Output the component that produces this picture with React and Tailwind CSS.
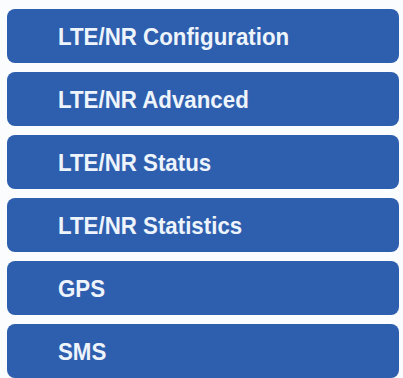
export default function App() {
  const items = [
    "LTE/NR Configuration",
    "LTE/NR Advanced",
    "LTE/NR Status",
    "LTE/NR Statistics",
    "GPS",
    "SMS",
  ];
  return (
    <div className="w-[403px] h-[378px] bg-[#fbfcfd] pt-[9px] pl-[7px] pr-[4px] flex flex-col gap-[9px] overflow-hidden">
      {items.map((t) => (
        <div
          key={t}
          className="h-[54px] shrink-0 rounded-[8px] bg-[#2e5fae] flex items-center pl-[51px] text-[22.3px] font-bold text-[#eef4fb]"
          style={{ fontFamily: '"Liberation Sans", Arial, sans-serif' }}
        >
          <span className="inline-block scale-y-[1.07] mt-[1px]">{t}</span>
        </div>
      ))}
    </div>
  );
}
